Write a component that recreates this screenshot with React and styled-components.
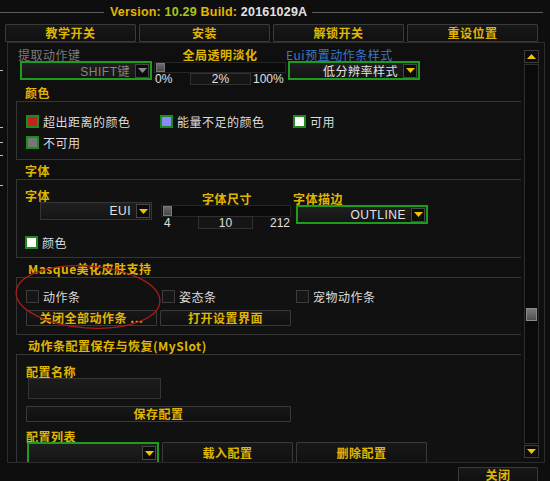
import React from 'react';
import styled, { createGlobalStyle } from 'styled-components';

const YELLOW = '#e0b600';
const FONT = `"Noto Sans CJK SC", "Liberation Sans", sans-serif`;
const LATIN = `"Liberation Sans", "Noto Sans CJK SC", sans-serif`;

const Global = createGlobalStyle`
  html, body { margin: 0; padding: 0; background: #0e0e0e; }
  body { font-family: ${FONT}; }
  * { box-sizing: border-box; }
`;

const Window = styled.div`
  width: 550px;
  height: 481px;
  overflow: hidden;
  background: #0e0e0e;
  position: relative;
  display: flex;
  flex-direction: column;
  & > * { flex-shrink: 0; }
`;

const Header = styled.div`
  height: 24px;
  display: flex;
  align-items: center;
  padding-right: 7px;
`;

const HeaderLine = styled.div`
  height: 1px;
  background: #5c5c5c;
  flex: ${p => (p.$w ? `0 0 ${p.$w}px` : '1')};
`;

const Version = styled.div`
  font-family: ${LATIN};
  font-weight: 700;
  font-size: 12.5px;
  color: ${YELLOW};
  padding: 0 5px 0 6px;
  white-space: nowrap;
  letter-spacing: 0.2px;
`;

const Num = styled.span`
  color: ${p => p.$c};
`;

const Tabs = styled.div`
  display: grid;
  grid-template-columns: repeat(4, 131px);
  gap: 3px;
  padding-left: 5px;
  height: 18px;
`;

const Button = styled.div`
  height: ${p => p.$h || 16}px;
  width: ${p => (p.$w ? `${p.$w}px` : 'auto')};
  border: 1px solid #3a3a3a;
  border-radius: 1px;
  background: linear-gradient(#181818, #101010);
  color: ${YELLOW};
  font-weight: 700;
  font-size: 12px;
  letter-spacing: 0.5px;
  display: flex;
  align-items: center;
  justify-content: center;
  line-height: 1;
  white-space: nowrap;
`;

const Body = styled.div`
  display: flex;
  height: 421px;
`;

const Gutter = styled.div`
  width: 7px;
  display: flex;
  flex-direction: column;
`;

const Tick = styled.div`
  width: 3px;
  height: 1px;
  background: #bdbdbd;
  margin-top: ${p => p.$mt}px;
`;

const Frame = styled.div`
  width: 538px;
  height: 421px;
  border: 1px solid #2c2c2c;
  display: flex;
  background: #0f0f0f;
`;

const ScrollArea = styled.div`
  flex: 1;
  overflow: hidden;
  padding-left: 8px;
`;

const Row1 = styled.div`
  display: grid;
  grid-template-columns: 138px 132px 1fr;
  padding-top: 5px;
  height: 39px;
`;

const Col = styled.div`
  display: flex;
  flex-direction: column;
  align-items: ${p => (p.$center ? 'stretch' : 'flex-start')};
  padding-top: ${p => p.$pt || 0}px;
`;

const Label = styled.div`
  font-size: 12px;
  line-height: 13px;
  height: 13px;
  letter-spacing: 0.5px;
  font-weight: ${p => (p.$tone === 'yellow' ? 700 : 400)};
  color: ${p =>
    p.$tone === 'gray' ? '#7c7c7c' : p.$tone === 'blue' ? '#3b78c6' : YELLOW};
  margin-left: ${p => p.$ml || 0}px;
  text-align: ${p => (p.$center ? 'center' : 'left')};
  white-space: nowrap;
`;

const DropField = styled.div`
  width: ${p => p.$w}px;
  height: ${p => p.$h || 19}px;
  margin-left: ${p => p.$ml || 0}px;
  border: ${p => (p.$green ? '2px solid #1f9b1f' : '1px solid #353535')};
  background: linear-gradient(#1f1f1f, #151515);
  display: flex;
  align-items: center;
  justify-content: flex-end;
  padding-right: 1px;
`;

const DropText = styled.span`
  font-family: ${LATIN}, ${FONT};
  font-size: 12px;
  letter-spacing: 0.5px;
  color: ${p => (p.$dim ? '#858585' : '#e2e2e2')};
  margin-right: 5px;
  white-space: nowrap;
`;

const DropBtn = styled.div`
  width: 14px;
  height: 14px;
  border: 1px solid #474747;
  background: #0b0b0b;
  display: flex;
  align-items: center;
  justify-content: center;
`;

const Arrow = ({ dim, up }) => (
  <svg width="9" height="5" viewBox="0 0 9 5">
    <polygon
      points={up ? '0,5 9,5 4.5,0' : '0,0 9,0 4.5,5'}
      fill={dim ? '#8a8a8a' : '#f0c400'}
    />
  </svg>
);

const Dropdown = ({ text, w, h, ml, green, dim }) => (
  <DropField $w={w} $h={h} $ml={ml} $green={green}>
    {text && <DropText $dim={dim}>{text}</DropText>}
    <DropBtn>
      <Arrow dim={dim} />
    </DropBtn>
  </DropField>
);

const SliderTrack = styled.div`
  width: ${p => p.$w}px;
  height: ${p => p.$h}px;
  border: 1px solid #262626;
  background: #0a0a0a;
  display: flex;
  align-items: stretch;
  padding: 0 0 0 1px;
`;

const Thumb = styled.div`
  width: 9px;
  border: 1px solid #7a7a7a;
  background: linear-gradient(#6a6a6a, #464646);
`;

const ValueRow = styled.div`
  display: flex;
  align-items: flex-end;
  height: ${p => p.$h}px;
  margin-top: ${p => p.$mt || 0}px;
  font-family: ${LATIN};
  font-size: 12px;
  color: #e0e0e0;
`;

const ValueText = styled.span`
  width: ${p => p.$w}px;
  padding-left: ${p => p.$pl || 0}px;
  line-height: 12px;
  white-space: nowrap;
`;

const ValueBox = styled.div`
  width: ${p => p.$w}px;
  height: ${p => p.$h}px;
  border: 1px solid #303030;
  background: #151515;
  display: flex;
  align-items: center;
  justify-content: center;
  line-height: 1;
`;

const SectionTitle = styled.div`
  height: 19px;
  padding-left: ${p => p.$pl || 9}px;
  display: flex;
  align-items: flex-end;
  padding-bottom: 2px;
  font-size: 12px;
  line-height: 13px;
  font-weight: 700;
  letter-spacing: 0.5px;
  color: ${YELLOW};
  white-space: nowrap;
`;

const Box = styled.div`
  width: 506px;
  border: 1px solid #353535;
  background: #111111;
  padding: ${p => p.$pad};
  position: relative;
`;

const CheckGrid = styled.div`
  display: grid;
  grid-template-columns: ${p => p.$cols};
  row-gap: 8px;
`;

const CheckItem = styled.div`
  display: flex;
  align-items: center;
  gap: 4px;
  height: 13px;
  font-size: 12px;
  letter-spacing: 0.5px;
  color: #dcdcdc;
  white-space: nowrap;
`;

const Swatch = styled.div`
  width: 13px;
  height: 13px;
  border: ${p => (p.$fill ? '2px solid #1c8c1c' : '1px solid #3c3c3c')};
  background: ${p => p.$fill || '#161616'};
`;

const Check = ({ fill, children }) => (
  <CheckItem>
    <Swatch $fill={fill} />
    <span>{children}</span>
  </CheckItem>
);

const FontGrid = styled.div`
  display: grid;
  grid-template-columns: 136px 132px 1fr;
  height: 48px;
`;

const ButtonRow = styled.div`
  display: grid;
  grid-template-columns: ${p => p.$cols};
  gap: 3px;
  margin-top: ${p => p.$mt || 0}px;
  margin-left: ${p => p.$ml || 0}px;
`;

const Input = styled.div`
  width: 133px;
  height: 21px;
  margin-left: 2px;
  border: 1px solid #353535;
  background: linear-gradient(#1c1c1c, #151515);
`;

const Spacer = styled.div`
  height: ${p => p.$h}px;
`;

const ScrollBar = styled.div`
  width: 15px;
  margin: 7px 5px 0 3px;
  display: flex;
  flex-direction: column;
`;

const ScrollBtn = styled.div`
  height: 13px;
  border: 1px solid #3c3c3c;
  background: #0c0c0c;
  display: flex;
  align-items: center;
  justify-content: center;
  margin-top: ${p => p.$mt || 0}px;
`;

const Track = styled.div`
  height: 380px;
  margin-top: 1px;
  border: 1px solid #2e2e2e;
  background: #0a0a0a;
  display: flex;
  flex-direction: column;
  align-items: center;
`;

const ScrollThumb = styled.div`
  width: 11px;
  height: 13px;
  margin-top: 243px;
  border: 1px solid #8a8a8a;
  background: linear-gradient(#7a7a7a, #4e4e4e);
`;

const Footer = styled.div`
  display: flex;
  justify-content: flex-end;
  padding: 4px 12px 0 0;
`;

const Ellipse = styled.svg`
  position: absolute;
  left: -4px;
  top: -16px;
  pointer-events: none;
  overflow: visible;
`;

export default function App() {
  return (
    <>
      <Global />
      <Window>
        <Header>
          <HeaderLine $w={104} />
          <Version>
            Version: <Num $c="#a9c61c">10.29</Num> Build: <Num $c="#e2e2e2">20161029A</Num>
          </Version>
          <HeaderLine />
        </Header>
        <Tabs>
          <Button $h={18}>教学开关</Button>
          <Button $h={18}>安装</Button>
          <Button $h={18}>解锁开关</Button>
          <Button $h={18}>重设位置</Button>
        </Tabs>
        <Body>
          <Gutter>
            <Tick $mt={28} />
            <Tick $mt={56} />
            <Tick $mt={14} />
            <Tick $mt={12} />
            <Tick $mt={29} />
          </Gutter>
          <Frame>
            <ScrollArea>
              <Row1>
                <Col>
                  <Label $tone="gray" $ml={2}>提取动作键</Label>
                  <Dropdown text="SHIFT键" w={132} ml={4} green dim />
                </Col>
                <Col $center>
                  <Label $tone="yellow" $center>全局透明淡化</Label>
                  <Spacer $h={1} />
                  <SliderTrack $w={132} $h={11}>
                    <Thumb />
                  </SliderTrack>
                  <ValueRow $h={12}>
                    <ValueText $w={36} $pl={1}>0%</ValueText>
                    <ValueBox $w={61} $h={12}>2%</ValueBox>
                    <ValueText $w={32} $pl={2}>100%</ValueText>
                  </ValueRow>
                </Col>
                <Col>
                  <Label $tone="blue">Eui预置动作条样式</Label>
                  <Dropdown text="低分辨率样式" w={132} ml={2} green />
                </Col>
              </Row1>

              <SectionTitle>颜色</SectionTitle>
              <Box $pad="13px 0 10px 9px">
                <CheckGrid $cols="134px 133px 1fr">
                  <Check fill="#c42222">超出距离的颜色</Check>
                  <Check fill="#8a8aff">能量不足的颜色</Check>
                  <Check fill="#ffffff">可用</Check>
                  <Check fill="#777777">不可用</Check>
                </CheckGrid>
              </Box>

              <SectionTitle>字体</SectionTitle>
              <Box $pad="0 0 8px 8px">
                <FontGrid>
                  <Col $pt={9}>
                    <Label $tone="yellow">字体</Label>
                    <Dropdown text="EUI" w={112} h={18} ml={15} />
                  </Col>
                  <Col $center $pt={12}>
                    <Label $tone="yellow" $center>字体尺寸</Label>
                    <SliderTrack $w={130} $h={12}>
                      <Thumb />
                    </SliderTrack>
                    <ValueRow $h={13} $mt={-1}>
                      <ValueText $w={37} $pl={3}>4</ValueText>
                      <ValueBox $w={55} $h={13}>10</ValueBox>
                      <ValueText $w={30} $pl={17}>212</ValueText>
                    </ValueRow>
                  </Col>
                  <Col $pt={12}>
                    <Label $tone="yellow">字体描边</Label>
                    <Dropdown text="OUTLINE" w={132} ml={3} green />
                  </Col>
                </FontGrid>
                <Spacer $h={8} />
                <CheckGrid $cols="1fr">
                  <Check fill="#ffffff">颜色</Check>
                </CheckGrid>
              </Box>

              <SectionTitle $pl={12}>Masque美化皮肤支持</SectionTitle>
              <Box $pad="12px 0 8px 9px">
                <Ellipse width="150" height="70" viewBox="0 0 150 70">
                  <ellipse
                    cx="75"
                    cy="35"
                    rx="72"
                    ry="31"
                    fill="none"
                    stroke="#a81c1c"
                    strokeWidth="1.3"
                    transform="rotate(4 75 35)"
                  />
                </Ellipse>
                <CheckGrid $cols="136px 134px 1fr">
                  <Check>动作条</Check>
                  <Check>姿态条</Check>
                  <Check>宠物动作条</Check>
                </CheckGrid>
                <ButtonRow $cols="131px 131px" $mt={7}>
                  <Button>关闭全部动作条 ...</Button>
                  <Button>打开设置界面</Button>
                </ButtonRow>
              </Box>

              <SectionTitle $pl={12}>动作条配置保存与恢复(MySlot)</SectionTitle>
              <Box $pad="10px 0 8px 9px">
                <Label $tone="yellow">配置名称</Label>
                <Input />
                <ButtonRow $cols="265px" $mt={7}>
                  <Button>保存配置</Button>
                </ButtonRow>
                <Spacer $h={8} />
                <Label $tone="yellow">配置列表</Label>
                <ButtonRow $cols="132px 131px 131px" $mt={-1} $ml={1}>
                  <Dropdown w={132} h={22} green />
                  <Button $h={22}>载入配置</Button>
                  <Button $h={22}>删除配置</Button>
                </ButtonRow>
                <Spacer $h={20} />
              </Box>
            </ScrollArea>
            <ScrollBar>
              <ScrollBtn>
                <Arrow up />
              </ScrollBtn>
              <Track>
                <ScrollThumb />
              </Track>
              <ScrollBtn $mt={1}>
                <Arrow />
              </ScrollBtn>
            </ScrollBar>
          </Frame>
        </Body>
        <Footer>
          <Button $w={80} $h={15}>关闭</Button>
        </Footer>
      </Window>
    </>
  );
}
